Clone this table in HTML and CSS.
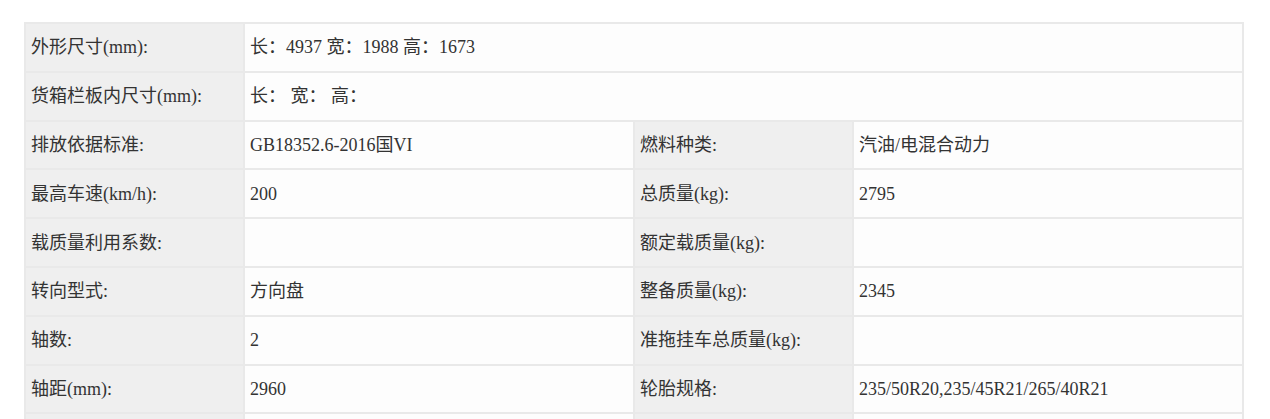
FILE: index.html
```html
<!DOCTYPE html>
<html lang="zh-CN">
<head>
<meta charset="utf-8">
<title>参数</title>
<link rel="stylesheet" href="styles.css">
</head>
<body>
<table class="spec">
  <colgroup>
    <col class="c-label"><col class="c-value"><col class="c-label"><col class="c-value">
  </colgroup>
  <tbody>
    <tr><td class="lbl">外形尺寸(mm):</td><td class="val" colspan="3">长：4937 宽：1988 高：1673</td></tr>
    <tr><td class="lbl">货箱栏板内尺寸(mm):</td><td class="val" colspan="3">长： 宽： 高：</td></tr>
    <tr><td class="lbl">排放依据标准:</td><td class="val">GB18352.6-2016国VI</td><td class="lbl">燃料种类:</td><td class="val">汽油/电混合动力</td></tr>
    <tr><td class="lbl">最高车速(km/h):</td><td class="val">200</td><td class="lbl">总质量(kg):</td><td class="val">2795</td></tr>
    <tr><td class="lbl">载质量利用系数:</td><td class="val"></td><td class="lbl">额定载质量(kg):</td><td class="val"></td></tr>
    <tr><td class="lbl">转向型式:</td><td class="val">方向盘</td><td class="lbl">整备质量(kg):</td><td class="val">2345</td></tr>
    <tr><td class="lbl">轴数:</td><td class="val">2</td><td class="lbl">准拖挂车总质量(kg):</td><td class="val"></td></tr>
    <tr><td class="lbl">轴距(mm):</td><td class="val">2960</td><td class="lbl">轮胎规格:</td><td class="val">235/50R20,235/45R21/265/40R21</td></tr>
    <tr><td class="lbl"></td><td class="val"></td><td class="lbl"></td><td class="val"></td></tr>
  </tbody>
</table>
</body>
</html>
```
FILE: styles.css
```css
html, body {
  margin: 0;
  padding: 0;
  background: #ffffff;
}
body {
  padding: 22px 27px 0 24px;
  font-family: "Liberation Serif", "Noto Sans CJK SC", serif;
  font-size: 18px;
  line-height: 20px;
  color: #333333;
}
.spec {
  width: 1219px;
  border-collapse: collapse;
  table-layout: fixed;
}
.c-label { width: 219px; }
.c-value { width: 390px; }
.spec td {
  border: 2px solid #e9e9e9;
  height: 46.8px;
  padding: 0 5px;
  vertical-align: middle;
  white-space: nowrap;
}
.lbl {
  background: #efefef;
}
.val {
  background: #fdfdfd;
}
```
